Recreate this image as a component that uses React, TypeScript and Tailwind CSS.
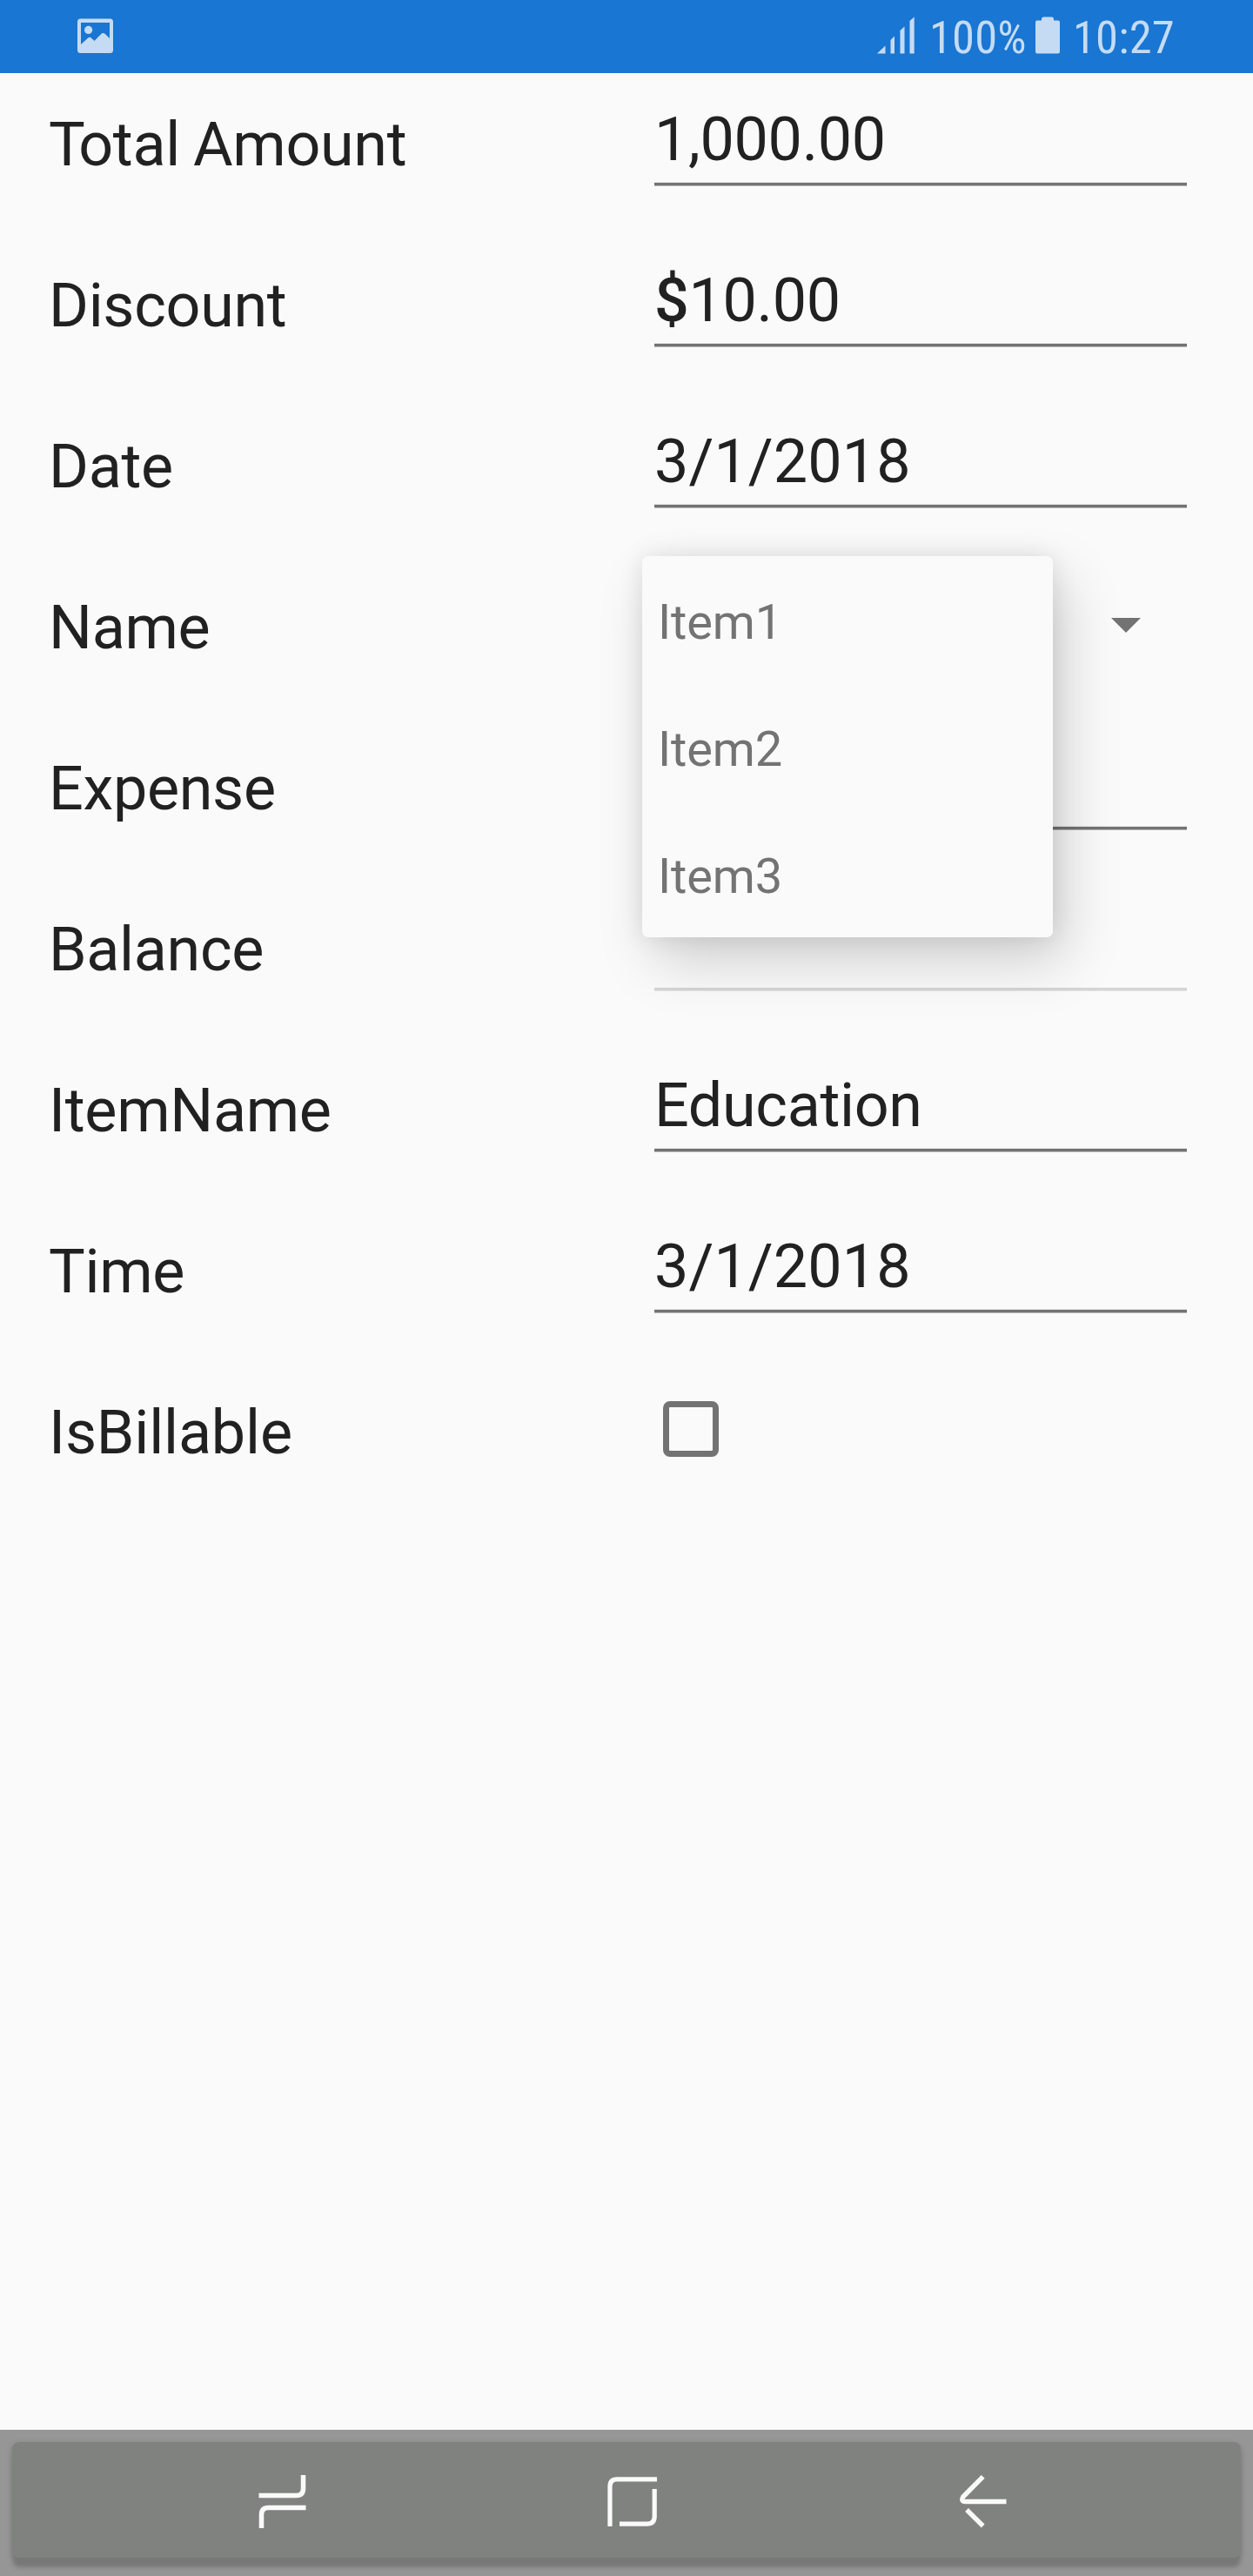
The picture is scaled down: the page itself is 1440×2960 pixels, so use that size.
import React from "react";

type Row = { label: React.ReactNode; id: string; value?: React.ReactNode; kind?: "dropdown" | "checkbox"; disabled?: boolean };

const rows: Row[] = [
  {
    id: "total",
    label: (
      <>
        <span className="tracking-[-7.6px]">T</span>otal<span className="tracking-[-2.3px]"> </span>Amount
      </>
    ),
    value: "1,000.00",
  },
  {
    id: "discount",
    label: "Discount",
    value: (
      <>
        <span className="font-medium">$</span>10.00
      </>
    ),
  },
  { id: "date", label: "Date", value: <span className="tracking-[0.1px]">3/1/2018</span> },
  { id: "name", label: "Name", kind: "dropdown" },
  { id: "expense", label: "Expense", value: "" },
  { id: "balance", label: "Balance", value: "", disabled: true },
  { id: "item", label: "ItemName", value: "Education" },
  { id: "time", label: "Time", value: <span className="tracking-[0.1px]">3/1/2018</span> },
  { id: "billable", label: <span className="tracking-[-0.15px]">IsBillable</span>, kind: "checkbox" },
];

function StatusBar() {
  return (
    <header className="flex h-[84px] items-start bg-[#1976d2] font-['Roboto_Condensed','Roboto',sans-serif] text-[52.5px] leading-[63px] tracking-[0.2px] text-[#c5dbf3]">
      <svg className="mt-[21px] ml-[89px] h-[40px] w-[41px]" viewBox="0 0 41 40" fill="currentColor">
        <path
          fillRule="evenodd"
          d="M3.5 .5H37.5Q41 .5 41 4V36.5Q41 40 37.5 40H3.500Q0 40 0 36.500V4Q0 .5 3.500 .5ZM4 5V30L12.300 22.400Q14 21 15.700 22.400L19.500 26L27 18.200Q29.500 16 32 18.200L37 23V5Z"
        />
        <circle cx="12.600" cy="13.400" r="4.600" />
      </svg>
      <svg className="mt-[19px] ml-[878px] h-[43px] w-[43px]" viewBox="0 0 43 43" fill="currentColor">
        <path d="M0 42.500L9.500 33.500V42.500ZM15.500 27L20 22.500V42.500H15.500ZM26.500 16L31.500 11.500V42.500H26.500ZM37.500 5L42.700 .5V42.500H37.500Z" />
      </svg>
      <span className="mt-[12px] ml-[17px] w-[110px]">100%</span>
      <svg className="mt-[19px] ml-[12px] h-[43px] w-[28px]" viewBox="0 0 28 43" fill="currentColor">
        <path d="M9.500 .5H18.500Q21 .5 21 3V4.500H26Q28 4.500 28 6.500V40.500Q28 42.500 26 42.500H2Q0 42.500 0 40.500V6.500Q0 4.500 2 4.500H7V3Q7 .5 9.500 .5Z" />
      </svg>
      <span className="mt-[12px] ml-[15px]">10:27</span>
    </header>
  );
}

function DropdownMenu() {
  return (
    <ul className="absolute top-0 left-[-14px] z-10 h-[438px] w-[472px] rounded-[7px] bg-[#fafafa] pt-[3px] shadow-[14px_28px_64px_rgba(0,0,0,0.17),0_0_28px_rgba(0,0,0,0.1)]">
      {["Item1", "Item2", "Item3"].map((item) => (
        <li key={item} className="h-[146px] pl-[18px] text-[56px] leading-[146px] tracking-[-0.15px] text-[#737373]">
          {item}
        </li>
      ))}
    </ul>
  );
}

function Field({ row }: { row: Row }) {
  if (row.kind === "dropdown") {
    return (
      <div className="relative h-[185px] w-[612px]">
        <DropdownMenu />
        <svg className="relative z-20 mt-[71px] ml-[525px] h-[17px] w-[34px]" viewBox="0 0 34 17" fill="#737373">
          <path d="M0 0H34L17 17Z" />
        </svg>
      </div>
    );
  }
  if (row.kind === "checkbox") {
    return (
      <div className="h-[185px] w-[612px] pt-[46px] pl-[10px]">
        <div className="h-[64px] w-[64px] rounded-[8px] border-[7px] border-[#737373]" />
      </div>
    );
  }
  return (
    <div className="h-[185px] w-[612px]">
      <div className="h-[125px] pt-[35px] text-[70px] leading-[82px] tracking-[-0.3px]">{row.value}</div>
      {row.disabled ? (
        <div className="h-[5px] border-y border-t-[#f7f7f7] border-b-[#e6e6e6] bg-[#d5d5d5]" />
      ) : (
        <div className="h-[5px] border-y border-t-[#e6e6e6] border-b-[#b5b5b5] bg-[#737373]" />
      )}
    </div>
  );
}

function NavigationBar() {
  return (
    <nav className="mt-auto h-[168px] bg-[#969696] px-[14px] pt-[14px]">
      <div className="flex h-[133px] items-start rounded-[8px] bg-[#808280] pt-[36px] shadow-[0_12px_5px_-1px_#787878,0_3px_7px_rgba(0,0,0,0.18)]">
        <svg className="mt-[1px] ml-[283px] h-[63px] w-[55px]" viewBox="0 0 55 63" fill="none" stroke="#fafafa" strokeWidth="5.500">
          <path d="M51.500 1V16.500Q51.500 24.500 43.500 24.500H.5M54.500 38.500H11.500Q3.500 38.500 3.500 46.500V62" />
        </svg>
        <svg className="mt-[4px] ml-[346px] h-[57px] w-[57px]" viewBox="0 0 57 57" fill="none" stroke="#fafafa" strokeWidth="5.200">
          <path d="M3 57V11Q3 2.800 11 2.800H57M54.200 14V45.500Q54.200 54.200 45.500 54.200H14" />
        </svg>
        <svg className="mt-[1px] ml-[347px] h-[62px] w-[55px]" viewBox="0 0 55 62" fill="none" stroke="#fafafa" strokeWidth="5.400">
          <path d="M27.700 2.800L4.800 26Q1.800 31.500 7.500 31.500H54.500M9 41L27.700 59.500" />
        </svg>
      </div>
    </nav>
  );
}

export default function App() {
  return (
    <div className="flex h-[2960px] w-[1440px] flex-col overflow-hidden bg-[#fafafa] font-['Roboto',sans-serif] text-[#212121]">
      <StatusBar />
      <main>
        {rows.map((row) => (
          <div key={row.id} className="flex h-[185px]">
            <div className="w-[752px] pt-[41px] pl-[56px] text-[70px] leading-[82px] tracking-[-0.3px]">{row.label}</div>
            <Field row={row} />
          </div>
        ))}
      </main>
      <NavigationBar />
    </div>
  );
}
